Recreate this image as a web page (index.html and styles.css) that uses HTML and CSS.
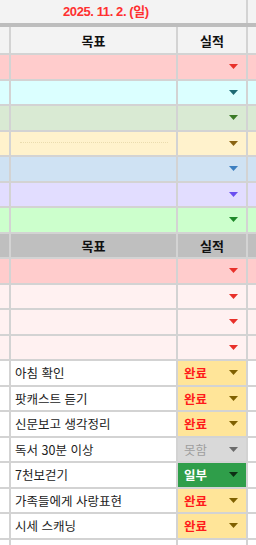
FILE: index.html
```html
<!DOCTYPE html>
<html lang="ko">
<head>
<meta charset="utf-8">
<link rel="stylesheet" href="styles.css">
</head>
<body>
<div class="top">
  <div class="date">2025. 11. 2. (일)</div>
  <div class="top-right"></div>
</div>
<div class="bar"></div>
<div class="sheet">
  <div class="row head"><div class="c"></div><div class="c hc">목표</div><div class="c hc">실적</div><div class="c"></div></div>

  <div class="row pink"><div class="c"></div><div class="c"></div><div class="c res"><svg class="arr" width="9" height="5" viewBox="0 0 9 5"><path d="M0 0H9L4.5 5Z" fill="currentColor"/></svg></div><div class="c"></div></div>
  <div class="row cyan"><div class="c"></div><div class="c"></div><div class="c res"><svg class="arr" width="9" height="5" viewBox="0 0 9 5"><path d="M0 0H9L4.5 5Z" fill="currentColor"/></svg></div><div class="c"></div></div>
  <div class="row sage"><div class="c"></div><div class="c"></div><div class="c res"><svg class="arr" width="9" height="5" viewBox="0 0 9 5"><path d="M0 0H9L4.5 5Z" fill="currentColor"/></svg></div><div class="c"></div></div>
  <div class="row cream"><div class="c"></div><div class="c dotted"><div class="dots"></div></div><div class="c res"><svg class="arr" width="9" height="5" viewBox="0 0 9 5"><path d="M0 0H9L4.5 5Z" fill="currentColor"/></svg></div><div class="c"></div></div>
  <div class="row blue"><div class="c"></div><div class="c"></div><div class="c res"><svg class="arr" width="9" height="5" viewBox="0 0 9 5"><path d="M0 0H9L4.5 5Z" fill="currentColor"/></svg></div><div class="c"></div></div>
  <div class="row lav"><div class="c"></div><div class="c"></div><div class="c res"><svg class="arr" width="9" height="5" viewBox="0 0 9 5"><path d="M0 0H9L4.5 5Z" fill="currentColor"/></svg></div><div class="c"></div></div>
  <div class="row mint"><div class="c"></div><div class="c"></div><div class="c res"><svg class="arr" width="9" height="5" viewBox="0 0 9 5"><path d="M0 0H9L4.5 5Z" fill="currentColor"/></svg></div><div class="c"></div></div>

  <div class="row head2"><div class="c"></div><div class="c hc">목표</div><div class="c hc">실적</div><div class="c"></div></div>

  <div class="row pink"><div class="c"></div><div class="c"></div><div class="c res"><svg class="arr" width="9" height="5" viewBox="0 0 9 5"><path d="M0 0H9L4.5 5Z" fill="currentColor"/></svg></div><div class="c"></div></div>
  <div class="row blush"><div class="c"></div><div class="c"></div><div class="c res"><svg class="arr" width="9" height="5" viewBox="0 0 9 5"><path d="M0 0H9L4.5 5Z" fill="currentColor"/></svg></div><div class="c"></div></div>
  <div class="row blush"><div class="c"></div><div class="c"></div><div class="c res"><svg class="arr" width="9" height="5" viewBox="0 0 9 5"><path d="M0 0H9L4.5 5Z" fill="currentColor"/></svg></div><div class="c"></div></div>
  <div class="row blush"><div class="c"></div><div class="c"></div><div class="c res"><svg class="arr" width="9" height="5" viewBox="0 0 9 5"><path d="M0 0H9L4.5 5Z" fill="currentColor"/></svg></div><div class="c"></div></div>

  <div class="row plain"><div class="c"></div><div class="c task">아침 확인</div><div class="c res chip done"><span>완료</span><svg class="arr" width="9" height="5" viewBox="0 0 9 5"><path d="M0 0H9L4.5 5Z" fill="currentColor"/></svg></div><div class="c"></div></div>
  <div class="row plain"><div class="c"></div><div class="c task">팟캐스트 듣기</div><div class="c res chip done"><span>완료</span><svg class="arr" width="9" height="5" viewBox="0 0 9 5"><path d="M0 0H9L4.5 5Z" fill="currentColor"/></svg></div><div class="c"></div></div>
  <div class="row plain"><div class="c"></div><div class="c task">신문보고 생각정리</div><div class="c res chip done"><span>완료</span><svg class="arr" width="9" height="5" viewBox="0 0 9 5"><path d="M0 0H9L4.5 5Z" fill="currentColor"/></svg></div><div class="c"></div></div>
  <div class="row plain"><div class="c"></div><div class="c task">독서 30분 이상</div><div class="c res chip miss"><span>못함</span><svg class="arr" width="9" height="5" viewBox="0 0 9 5"><path d="M0 0H9L4.5 5Z" fill="currentColor"/></svg></div><div class="c"></div></div>
  <div class="row plain"><div class="c"></div><div class="c task">7천보걷기</div><div class="c res chip part"><span>일부</span><svg class="arr" width="9" height="5" viewBox="0 0 9 5"><path d="M0 0H9L4.5 5Z" fill="currentColor"/></svg></div><div class="c"></div></div>
  <div class="row plain"><div class="c"></div><div class="c task">가족들에게 사랑표현</div><div class="c res chip done"><span>완료</span><svg class="arr" width="9" height="5" viewBox="0 0 9 5"><path d="M0 0H9L4.5 5Z" fill="currentColor"/></svg></div><div class="c"></div></div>
  <div class="row plain"><div class="c"></div><div class="c task">시세 스캐닝</div><div class="c res chip done"><span>완료</span><svg class="arr" width="9" height="5" viewBox="0 0 9 5"><path d="M0 0H9L4.5 5Z" fill="currentColor"/></svg></div><div class="c"></div></div>
  <div class="row plain"><div class="c"></div><div class="c"></div><div class="c"></div><div class="c"></div></div>
</div>
</body>
</html>
```
FILE: styles.css
```css
html, body {
  margin: 0;
  padding: 0;
  width: 256px;
  height: 545px;
  overflow: hidden;
  background: #ffffff;
  font-family: "Noto Sans CJK KR", "Liberation Sans", sans-serif;
}

.top {
  display: grid;
  grid-template-columns: 246px 2px 8px;
  height: 23px;
  background: #d3d3d3;
}
.top .date {
  grid-column: 1;
  background: #f3f3f3;
  padding-left: 63px;
  line-height: 23px;
  font-family: "Liberation Sans", "Noto Sans CJK KR", sans-serif;
  font-size: 13px;
  font-weight: 700;
  color: #ff3030;
  letter-spacing: -0.4px;
}
.top .top-right {
  grid-column: 3;
  background: #f3f3f3;
}

.bar {
  height: 4px;
  background: #bdbdbd;
}

.sheet {
  display: flex;
  flex-direction: column;
  gap: 2px;
  background: #d3d3d3;
}

.row {
  display: grid;
  grid-template-columns: 9px 165px 68px 8px;
  column-gap: 2px;
  height: 23.5px;
  flex: none;
}
.row.head {
  height: 26px;
}

.c {
  min-width: 0;
}

.head .c { background: #f3f3f3; }
.head2 .c { background: #bfbfbf; }

.hc {
  display: flex;
  align-items: center;
  justify-content: center;
  font-weight: 700;
  font-size: 13px;
  color: #111111;
}

.pink .c  { background: #ffcccc; color: #e8302a; }
.cyan .c  { background: #dbffff; color: #1d6a73; }
.sage .c  { background: #d9ead3; color: #3b7a26; }
.cream .c { background: #fff2cc; color: #8a6412; }
.blue .c  { background: #cfe2f3; color: #3d7fc0; }
.lav .c   { background: #e2ddff; color: #6a4ff0; }
.mint .c  { background: #ccffcc; color: #1f8a2a; }
.blush .c { background: #fff1f1; color: #e8302a; }
.plain .c { background: #ffffff; }

.res {
  display: flex;
  align-items: center;
  justify-content: flex-end;
  padding: 0 8px 0 6px;
}
.arr {
  display: block;
  flex: none;
}

.dotted {
  padding: 10px 8px 0 9px;
}
.dots {
  border-top: 1px dotted #eadcae;
}

.task {
  display: flex;
  align-items: center;
  padding-left: 4px;
  font-size: 12.5px;
  color: #222222;
  white-space: nowrap;
}

.chip {
  justify-content: space-between;
  font-size: 12.5px;
  font-weight: 700;
}
.plain .chip.done { background: #ffe599; color: #ff1a1a; }
.plain .chip.done .arr { color: #7f6000; }
.plain .chip.miss { background: #d9d9d9; color: #9e9e9e; font-weight: 400; }
.plain .chip.miss .arr { color: #6b6b6b; }
.plain .chip.part { background: #2f9e4a; color: #ffffff; }
.plain .chip.part .arr { color: #0d2f14; }
```
